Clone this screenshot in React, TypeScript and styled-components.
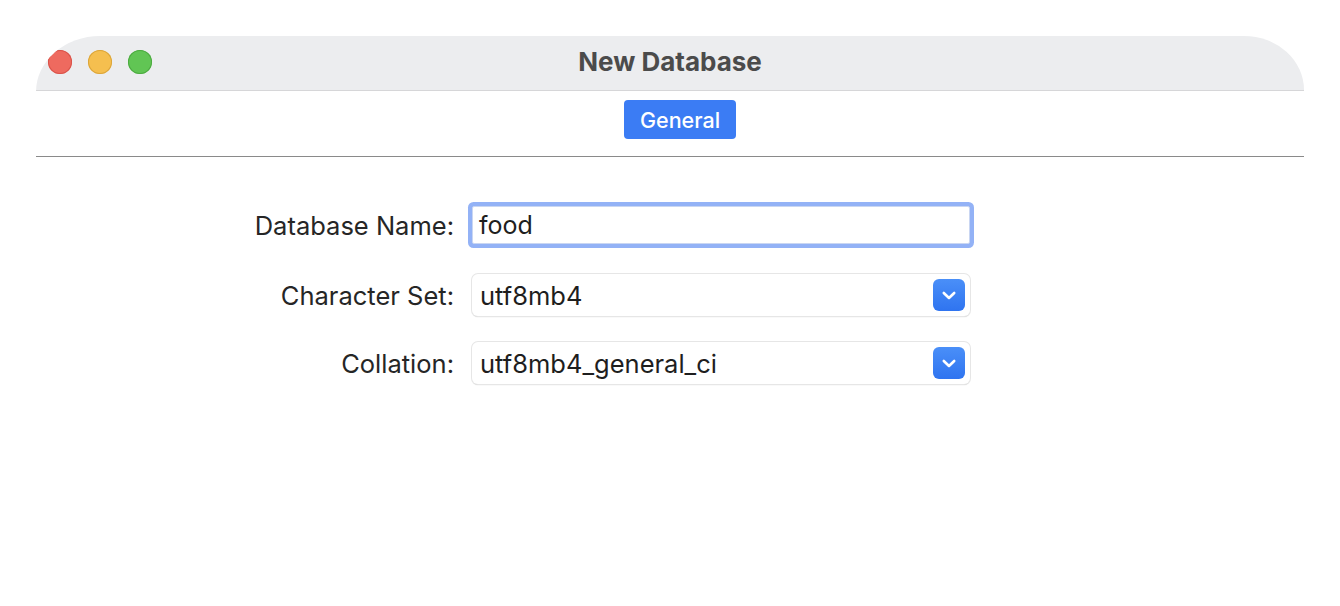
import React from "react";
import styled, { createGlobalStyle } from "styled-components";

const Global = createGlobalStyle`
  html, body {
    margin: 0;
    padding: 0;
    background: #ffffff;
  }
  body {
    font-family: Inter, "Noto Sans", "Liberation Sans", sans-serif;
    color: #262626;
  }
`;

const Page = styled.div`
  padding: 36px 36px 0;
  height: 606px;
  box-sizing: border-box;
`;

const Window = styled.div`
  display: flex;
  flex-direction: column;
  background: #ffffff;
  border-radius: 64px 60px 0 0 / 56px 54px 0 0;
  overflow: hidden;
  height: 100%;
`;

const TitleBar = styled.div`
  position: relative;
  height: 54px;
  background: #ecedef;
  border-bottom: 1px solid #d6d6d8;
  display: flex;
  align-items: center;
  justify-content: center;
`;

const Lights = styled.div`
  position: absolute;
  left: 12px;
  top: 14px;
  display: flex;
  gap: 16px;
`;

const Light = styled.span<{ $fill: string; $edge: string }>`
  width: 24px;
  height: 24px;
  border-radius: 50%;
  background: ${(p) => p.$fill};
  box-shadow: inset 0 0 0 1px ${(p) => p.$edge};
`;

const Title = styled.h1`
  margin: 0 0 3px;
  font-size: 26px;
  font-weight: 700;
  color: #4b4b4b;
`;

const TabBar = styled.div`
  display: flex;
  justify-content: center;
  padding: 9px 0 17px;
  border-bottom: 1px solid #8a8a8a;
`;

const Tab = styled.button`
  height: 39px;
  width: 112px;
  margin-left: 20px;
  border: none;
  border-radius: 4px;
  background: #3b7cf4;
  color: #ffffff;
  font-family: inherit;
  font-size: 21.5px;
  font-weight: 500;
  padding: 0;
`;

const Form = styled.div`
  display: grid;
  grid-template-columns: 418px 498px;
  column-gap: 18px;
  row-gap: 26px;
  align-items: center;
  padding-top: 45px;
`;

const Label = styled.label`
  text-align: right;
  font-size: 25.5px;
  color: #262626;
`;

const TextInput = styled.div`
  height: 38px;
  margin: 4px 0;
  box-sizing: border-box;
  border: 1px solid #c9d6f2;
  box-shadow: 0 0 0 4px #93b2f6;
  border-radius: 2px;
  background: #ffffff;
  display: flex;
  align-items: center;
  padding-left: 6px;
  font-size: 25px;
  color: #1e1e1e;
`;

const Select = styled.div`
  height: 42px;
  box-sizing: border-box;
  border-radius: 6px;
  background: #ffffff;
  box-shadow: 0 0 0 1px #e6e6e6, 0 1px 1px 0 #bdbdbd;
  display: flex;
  align-items: center;
  justify-content: space-between;
  padding: 0 5px 0 8px;
  font-size: 25.5px;
  color: #1e1e1e;
`;

const Arrow = styled.span`
  width: 32px;
  height: 32px;
  border-radius: 6px;
  background: linear-gradient(#4a8ff8, #2f74f0);
  display: flex;
  align-items: center;
  justify-content: center;
`;

const Chevron = () => (
  <svg width="16" height="11" viewBox="0 0 16 11">
    <path
      d="M2.8 3 L8 8 L13.2 3"
      fill="none"
      stroke="#ffffff"
      strokeWidth="2.6"
      strokeLinecap="round"
      strokeLinejoin="round"
    />
  </svg>
);

export default function App() {
  return (
    <>
      <Global />
      <Page>
        <Window>
          <TitleBar>
            <Lights>
              <Light $fill="#ee6a5f" $edge="#d9534a" />
              <Light $fill="#f5bf4f" $edge="#dba53a" />
              <Light $fill="#61c554" $edge="#4caa40" />
            </Lights>
            <Title>New Database</Title>
          </TitleBar>
          <TabBar>
            <Tab>General</Tab>
          </TabBar>
          <Form>
            <Label>Database Name:</Label>
            <TextInput>food</TextInput>
            <Label>Character Set:</Label>
            <Select>
              utf8mb4
              <Arrow>
                <Chevron />
              </Arrow>
            </Select>
            <Label>Collation:</Label>
            <Select>
              utf8mb4_general_ci
              <Arrow>
                <Chevron />
              </Arrow>
            </Select>
          </Form>
        </Window>
      </Page>
    </>
  );
}
